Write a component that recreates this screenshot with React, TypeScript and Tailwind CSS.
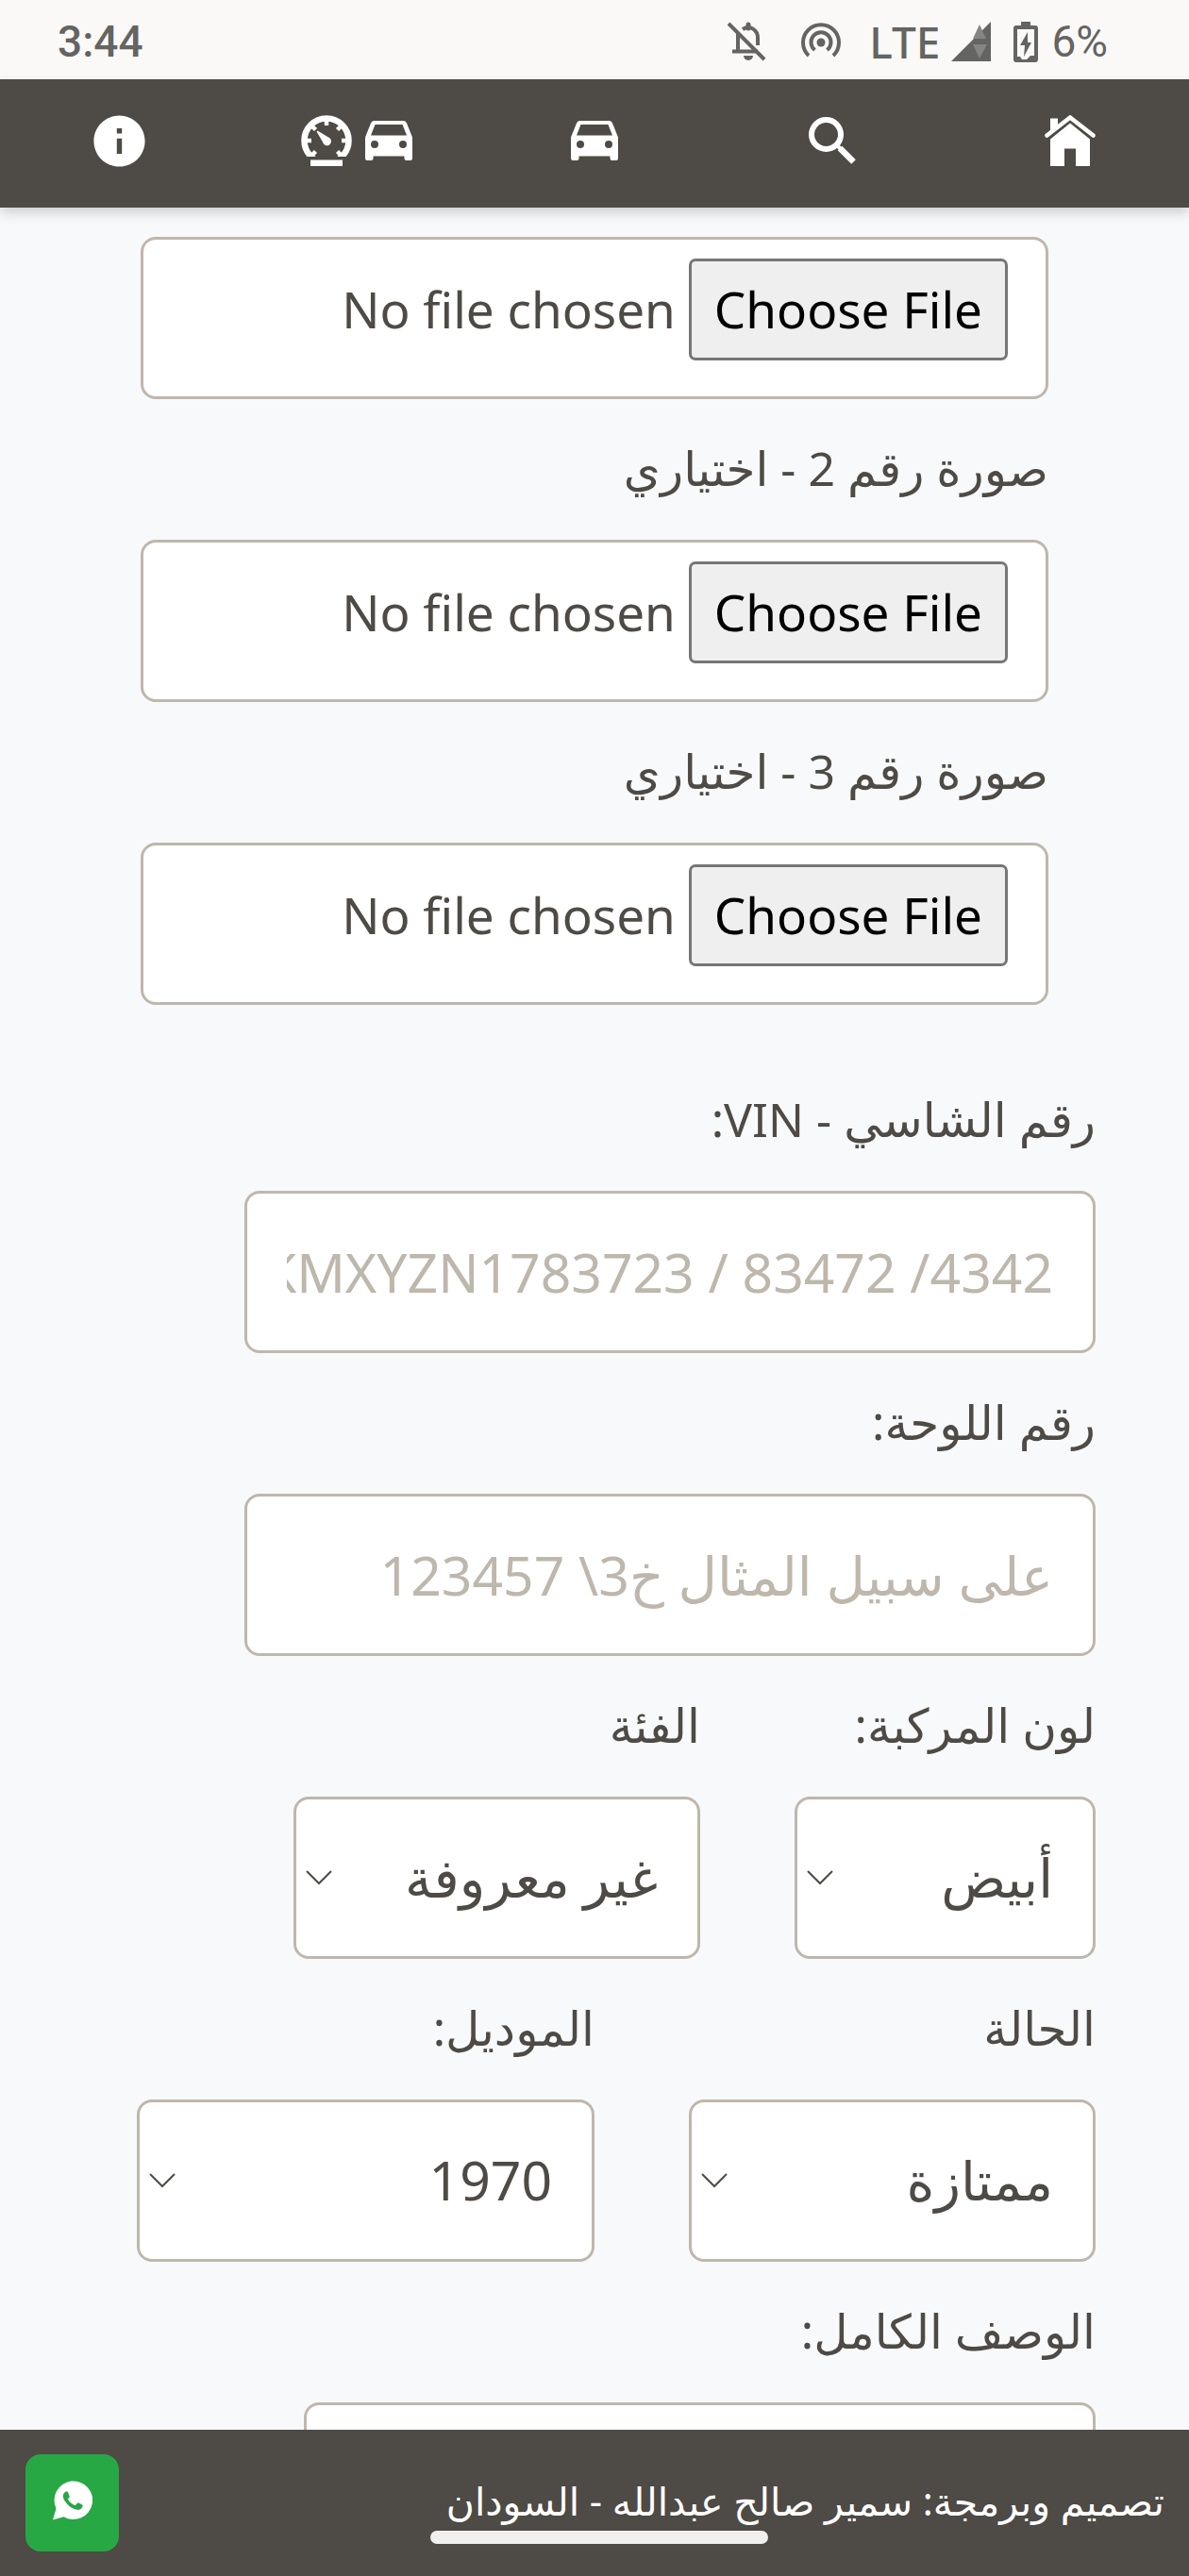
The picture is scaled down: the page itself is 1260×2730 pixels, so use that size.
import React from "react";
import { MdInfo } from "react-icons/md";

const fieldBox =
  "rounded-[16px] border-[3px] border-[#beb7ac] bg-white text-[#4e4a45] h-[172px]";

function BellOff() {
  return (
    <svg width="42" height="42" viewBox="0 0 42 42" fill="none" stroke="#646462" strokeWidth="4">
      <path d="M1 2 39 40" />
      <path d="M11 12V31M5 31.5H32M16 8C24 3 32 9 32 17V25" />
      <path d="M22 7V3" strokeLinecap="round" strokeWidth="5" />
      <path d="M17 36H27A5 5 0 0 1 17 36Z" fill="#646462" stroke="none" />
    </svg>
  );
}

function Hotspot() {
  return (
    <svg width="42" height="42" viewBox="0 0 42 42" fill="none" stroke="#646462" strokeWidth="4">
      <circle cx="21" cy="22" r="4.5" fill="#646462" stroke="none" />
      <path d="M14.5 30A10.5 10.5 0 1 1 27.5 30" />
      <path d="M8 36A19 19 0 1 1 34 36" />
    </svg>
  );
}

function Signal() {
  return (
    <svg width="42" height="42" viewBox="0 0 42 42">
      <path d="M0 42 42 0V42Z" fill="#646462" />
      <path d="M30 3 37 18H23ZM23 24H38L30 39Z" fill="#858583" />
    </svg>
  );
}

function Battery() {
  return (
    <svg width="26" height="43" viewBox="0 0 26 43">
      <path d="M8 0H18V4H23Q26 4 26 7V40Q26 43 23 43H3Q0 43 0 40V7Q0 4 3 4H8Z" fill="#646462" />
      <path d="M4 8H22V36H18L14 40H9L7 37H4Z" fill="#faf9f7" />
      <path d="M15 11 7 25H12L11 37 19 22H15Z" fill="#646462" />
    </svg>
  );
}

function Gauge() {
  return (
    <svg width="54" height="54" viewBox="0 0 54 54" fill="none" stroke="#fff">
      <defs>
        <clipPath id="dial">
          <path d="M0 0H54V44H0Z" />
        </clipPath>
      </defs>
      <g clipPath="url(#dial)">
        <circle cx="27" cy="27" r="23.5" strokeWidth="6.5" />
        <path
          d="M27 4V11M4 27H11M43 27H50M10.5 10.5 15.5 15.5M43.5 10.5 38.5 15.5M10.5 43.5 15.5 38.5M43.5 43.5 38.5 38.5"
          strokeWidth="4.5"
        />
      </g>
      <path d="M16.5 17.5 17.5 16.5 29 23.5A4.5 4.5 0 1 1 23 28.5Z" fill="#fff" stroke="none" />
      <path d="M10 47.5H44V54H10Z" fill="#fff" stroke="none" />
    </svg>
  );
}

function Car() {
  return (
    <svg width="50" height="42" viewBox="0 0 50 42" fill="#fff" fillRule="evenodd">
      <path d="M9 0H41Q43 0 44 2.5L50 17.5V40Q50 42 48 42H43.5Q41.5 42 41.5 40V37.5H8.5V40Q8.5 42 6.5 42H2Q0 42 0 40V17.5L6 2.5Q7 0 9 0ZM10.5 4 6 15.5H44L39.5 4ZM10 21A4 4 0 1 0 10 29A4 4 0 1 0 10 21ZM40 21A4 4 0 1 0 40 29A4 4 0 1 0 40 21Z" />
    </svg>
  );
}

function Search() {
  return (
    <svg width="50" height="50" viewBox="0 0 50 50" fill="none" stroke="#fff">
      <circle cx="18.5" cy="18.5" r="15.5" strokeWidth="6" />
      <path d="M29 29 35 35" strokeWidth="4" />
      <path d="M33 33 47.5 47.5" strokeWidth="6.5" />
    </svg>
  );
}

function Home() {
  return (
    <svg width="54" height="54" viewBox="0 0 54 54" fill="#fff">
      <path d="M6 3.5H14V13L6 19Z" />
      <path d="M2.5 21.5 27 2.5 51.5 21.5" fill="none" stroke="#fff" strokeWidth="4.5" strokeLinecap="round" />
      <path d="M6 25.5 27 8.5 48 25.5V54H33V35.5H21V54H6Z" />
    </svg>
  );
}

function Whatsapp() {
  return (
    <svg width="42" height="42" viewBox="0 0 42 42">
      <path d="M0 41.5 3.5 29.5A20.3 20.3 0 1 1 11.5 38.2Z" fill="#fff" />
      <path
        transform="translate(.5 .5) scale(1.72)"
        fill="#28a745"
        d="M17.472 14.382c-.297-.149-1.758-.867-2.03-.967-.273-.099-.471-.148-.67.15-.197.297-.767.966-.94 1.164-.173.199-.347.223-.644.075-.297-.15-1.255-.463-2.39-1.475-.883-.788-1.48-1.761-1.653-2.059-.173-.297-.018-.458.13-.606.134-.133.298-.347.446-.52.149-.174.198-.298.298-.497.099-.198.05-.371-.025-.52-.075-.149-.669-1.612-.916-2.207-.242-.579-.487-.5-.669-.51-.173-.008-.371-.01-.57-.01-.198 0-.52.074-.792.372-.272.297-1.04 1.016-1.04 2.479 0 1.462 1.065 2.875 1.213 3.074.149.198 2.096 3.2 5.077 4.487.709.306 1.262.489 1.694.625.712.227 1.36.195 1.871.118.571-.085 1.758-.719 2.006-1.413.248-.694.248-1.289.173-1.413-.074-.124-.272-.198-.57-.347Z"
      />
    </svg>
  );
}

function FieldLabel({ id, children }: { id: string; children: React.ReactNode }) {
  return (
    <label htmlFor={id} className="flex h-[149px] items-center whitespace-nowrap pb-[2px] text-[50px] text-[#4e4a45]">
      {children}
    </label>
  );
}

function FileField({ id, label }: { id: string; label?: string }) {
  return (
    <div>
      {label && <FieldLabel id={id}>{label}</FieldLabel>}
      <input
        id={id}
        type="file"
        aria-label={label ?? "صورة رقم 1"}
        className={`${fieldBox} block w-full px-[40px] pt-[20px] text-[53px] file:me-[14px] file:h-[108px] file:rounded-[7px] file:border-[3px] file:border-solid file:border-[#767676] file:bg-[#efefef] file:px-[24px] file:text-black`}
      />
    </div>
  );
}

function SelectField({ id, label, value, width }: { id: string; label: string; value: string; width: string }) {
  return (
    <div className={width}>
      <FieldLabel id={id}>{label}</FieldLabel>
      <div className="relative">
        <select id={id} defaultValue={value} className={`${fieldBox} block w-full appearance-none pe-[60px] ps-[42px] text-[57px]`}>
          <option>{value}</option>
        </select>
        <svg
          className="pointer-events-none absolute left-[13px] top-[78px]"
          width="28"
          height="16"
          viewBox="0 0 28 16"
          fill="none"
          stroke="#4e4a45"
          strokeWidth="2"
        >
          <path d="M1 1 14 14 27 1" />
        </svg>
      </div>
    </div>
  );
}

const navItems = [
  { name: "الرئيسية", icon: <Home /> },
  { name: "بحث", icon: <Search /> },
  { name: "السيارات", icon: <Car /> },
  { name: "عداد السيارة", icon: <><Car /><Gauge /></> },
  { name: "معلومات", icon: <MdInfo size={65} color="#fff" /> },
];

export default function App() {
  return (
    <div dir="rtl" lang="ar" className="flex h-screen flex-col overflow-hidden bg-[#f8f9fb] font-['Noto_Sans','DejaVu_Sans',sans-serif]">
      <div dir="ltr" className="flex h-[84px] shrink-0 items-center justify-between bg-[#faf9f7] pl-[61px] pr-[86px] pt-[4px] font-[Roboto,sans-serif] text-[46px] font-medium text-[#646462]">
        <span>3:44</span>
        <div className="flex items-center">
          <BellOff />
          <span className="ml-[36px]"><Hotspot /></span>
          <span className="ml-[30px] font-['Noto_Sans',sans-serif]">LTE</span>
          <span className="ml-[12px]"><Signal /></span>
          <span className="ml-[24px]"><Battery /></span>
          <span className="ml-[14px] font-normal">6%</span>
        </div>
      </div>

      <nav className="z-10 grid h-[136px] shrink-0 grid-cols-5 bg-[#4e4a45] pb-[6px] shadow-[0_6px_12px_rgba(0,0,0,0.16)]">
        {navItems.map((item) => (
          <a key={item.name} href="#" aria-label={item.name} className="flex items-center justify-center gap-[14px]">
            {item.icon}
          </a>
        ))}
      </nav>

      <main className="min-h-0 flex-1 overflow-hidden pt-[31px]">
        <form>
          <div className="mx-[149px]">
            <FileField id="photo1" />
            <FileField id="photo2" label="صورة رقم 2 - اختياري" />
            <FileField id="photo3" label="صورة رقم 3 - اختياري" />
          </div>

          <div className="ml-[145px] mr-[99px] mt-[48px]">
            <FieldLabel id="vin">رقم الشاسي - VIN:</FieldLabel>
            <input
              id="vin"
              placeholder="KMXYZN1783723 / 83472 /4342"
              className={`${fieldBox} block w-[902px] max-w-full px-[42px] text-[57px] placeholder:text-[#beb7ac] placeholder:opacity-100`}
            />
            <FieldLabel id="plate">رقم اللوحة:</FieldLabel>
            <input
              id="plate"
              placeholder="على سبيل المثال خ3\ 123457"
              className={`${fieldBox} block w-[902px] max-w-full px-[42px] text-[57px] placeholder:text-[#beb7ac] placeholder:opacity-100`}
            />
            <div className="flex gap-[100px]">
              <SelectField id="color" label="لون المركبة:" value="أبيض" width="w-[319px]" />
              <SelectField id="category" label="الفئة" value="غير معروفة" width="w-[431px]" />
            </div>
            <div className="flex gap-[100px]">
              <SelectField id="condition" label="الحالة" value="ممتازة" width="w-[431px]" />
              <SelectField id="model" label="الموديل:" value="1970" width="flex-1" />
            </div>
            <FieldLabel id="description">الوصف الكامل:</FieldLabel>
            <textarea id="description" className={`${fieldBox} block w-[839px] max-w-full resize-none px-[42px] text-[57px]`} />
          </div>
        </form>
      </main>

      <footer className="relative z-10 flex h-[155px] shrink-0 items-center justify-between bg-[#4e4a45] pl-[27px] pr-[26px]">
        <p className="whitespace-nowrap pb-[4px] text-[41px] text-white">تصميم وبرمجة: سمير صالح عبدالله - السودان</p>
        <a href="#" aria-label="WhatsApp" className="flex h-[103px] w-[99px] items-center justify-center rounded-[16px] bg-[#28a745] pb-[5px]">
          <Whatsapp />
        </a>
        <div className="absolute bottom-[34px] left-[456px] h-[14px] w-[358px] rounded-full bg-[#f0f0ee]" />
      </footer>
    </div>
  );
}
